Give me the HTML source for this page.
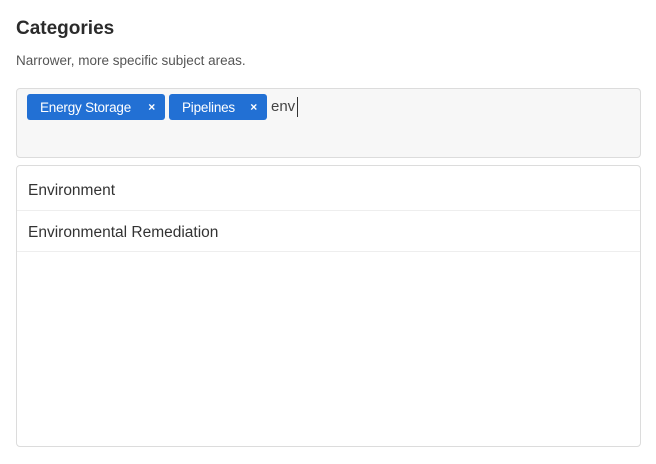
<!DOCTYPE html>
<html><head><style>
body{margin:0;background:#fff;font-family:"Liberation Sans",sans-serif;color:#333;width:656px;height:464px;position:relative;overflow:hidden}
.t{position:absolute;left:16px;top:18px;font-size:19px;font-weight:bold;color:#2b2b2b}
.s{position:absolute;left:16px;top:53px;font-size:13.5px;color:#555}
.box{position:absolute;left:16px;top:88px;width:623px;height:68px;background:#f7f7f7;border:1px solid #dcdcdc;border-radius:4px}
.tag{position:absolute;top:94px;height:26px;background:#2270d4;color:#fff;border-radius:3px;font-size:13.5px;line-height:27px;box-sizing:border-box;padding-left:13px;letter-spacing:-0.2px}
.tag b{position:absolute;right:10px;top:0;font-size:12px}
.inp{position:absolute;left:271px;top:98px;font-size:15px;color:#444}
.cur{position:absolute;left:297px;top:97px;width:1px;height:20px;background:#333}
.dd{position:absolute;left:16px;top:165px;width:623px;height:280px;border:1px solid #dcdcdc;border-radius:4px;background:#fff}
.it{height:40px;line-height:44px;border-bottom:1px solid #eee;padding-left:11px;font-size:15.5px;color:#333}
</style></head><body>
<div class="t">Categories</div>
<div class="s">Narrower, more specific subject areas.</div>
<div class="box"></div>
<div class="tag" style="left:27px;width:138px">Energy Storage<b>×</b></div>
<div class="tag" style="left:169px;width:98px">Pipelines<b>×</b></div>
<div class="inp">env</div><div class="cur"></div>
<div class="dd"><div class="it" style="height:44px;line-height:50px">Environment</div><div class="it">Environmental Remediation</div></div>
</body></html>
